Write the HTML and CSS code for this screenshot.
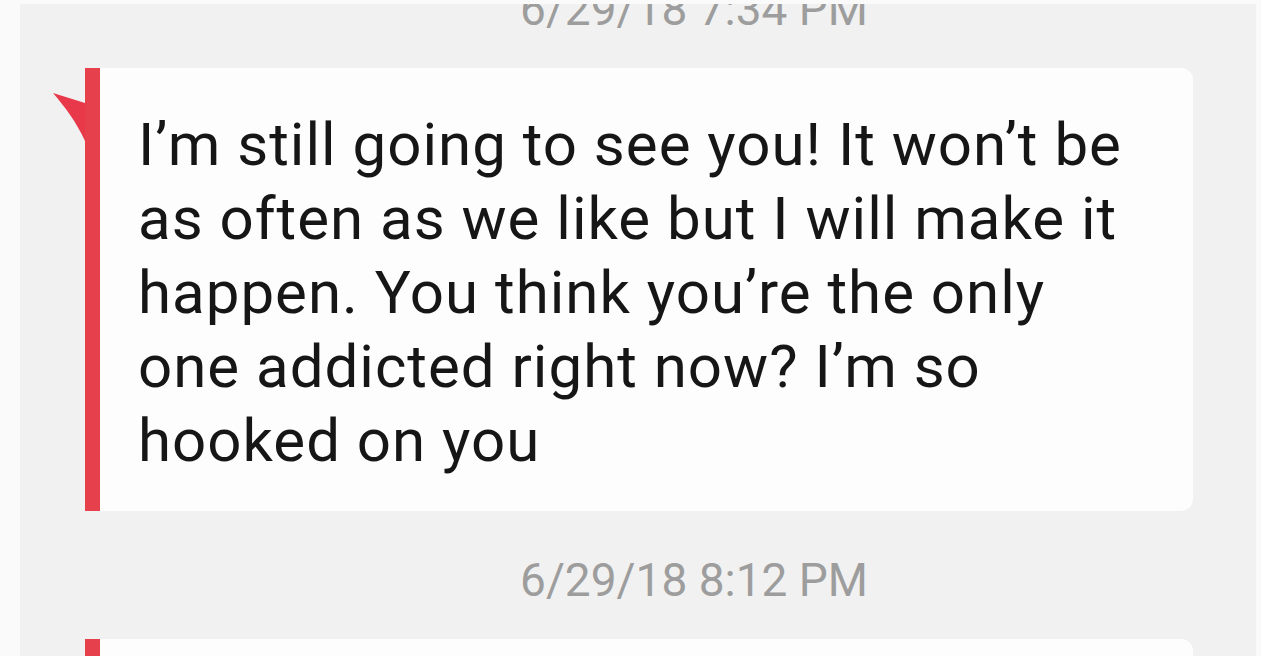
FILE: index.html
```html
<!DOCTYPE html>
<html>
<head>
<meta charset="utf-8">
<link rel="stylesheet" href="styles.css">
</head>
<body>
<div class="panel">
  <div class="stamp stamp-first">6/29/18 7:34 PM</div>
  <div class="bubble">
    <svg class="flag" width="34" height="50" viewBox="0 0 34 50"><path d="M0 2 L32 12 L32 50 C24 32 12 16 0 2 Z" fill="#e8394a"/></svg>
    <p class="msg">I’m still going to see you! It won’t be as often as we like but I will make it happen. You think you’re the only one addicted right now? I’m so hooked on you</p>
  </div>
  <div class="stamp stamp-second">6/29/18 8:12 PM</div>
  <div class="bubble bubble-next">
    <p class="msg">&nbsp;</p>
  </div>
</div>
</body>
</html>
```
FILE: styles.css
```css
html, body {
  margin: 0;
  padding: 0;
  background: #fafafa;
  width: 1261px;
  height: 656px;
  overflow: hidden;
}
.panel {
  margin: 4px 5px 0 20px;
  height: 652px;
  background: #f1f1f1;
  overflow: hidden;
}
.stamp {
  font-family: Roboto, "Liberation Sans", sans-serif;
  font-size: 46px;
  line-height: 50px;
  color: #9d9d9d;
  text-align: center;
  padding-left: 112px;
}
.stamp-first {
  margin-top: -20px;
  margin-bottom: 34px;
}
.stamp-second {
  margin-top: 44px;
  margin-bottom: 34px;
}
.bubble {
  position: relative;
  margin: 0 63px 0 65px;
  background: #fdfdfe;
  border-left: 15px solid #e5404c;
  border-radius: 0 12px 12px 0;
  padding: 40px 55px 33px 38px;
}
.bubble-next {
  height: 200px;
}
.flag {
  position: absolute;
  left: -47px;
  top: 23px;
}
.msg {
  margin: 0;
  font-family: Roboto, "Liberation Sans", sans-serif;
  font-size: 60px;
  letter-spacing: 1px;
  line-height: 74px;
  color: #161616;
}
```
